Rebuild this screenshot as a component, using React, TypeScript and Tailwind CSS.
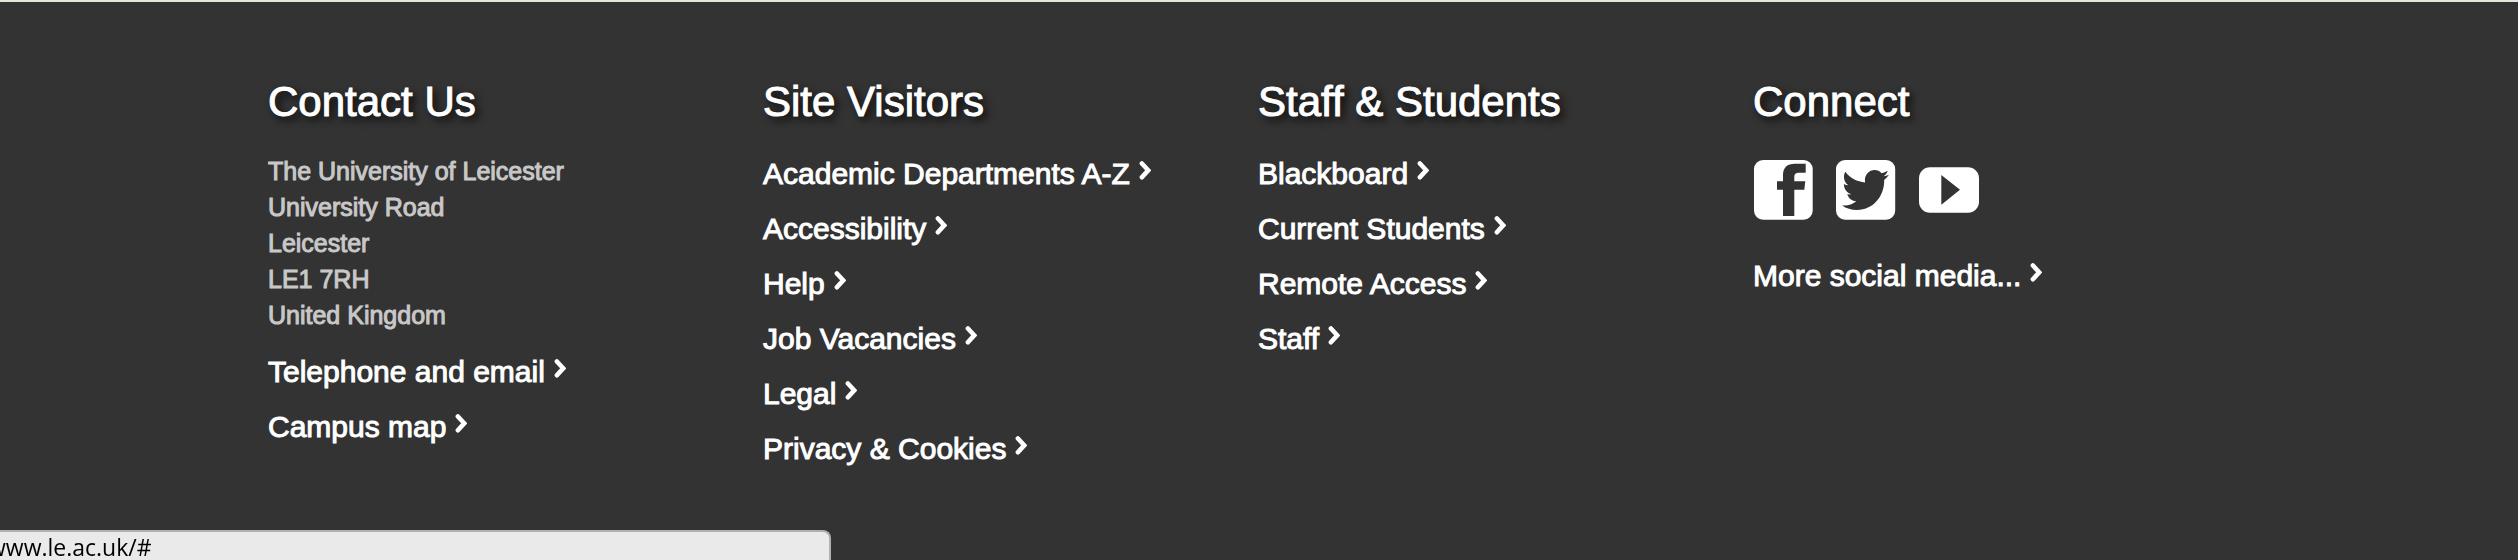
import type { ReactNode } from "react";

function Chevron() {
  return (
    <svg
      aria-hidden="true"
      viewBox="0 0 12 19"
      className="mb-1 ml-[9px] inline-block h-[19px] w-3 align-baseline"
      fill="none"
      stroke="currentColor"
      strokeWidth="4.6"
      strokeLinecap="round"
    >
      <path d="M2.9 2.5 9.2 9.3 2.9 16.3" />
    </svg>
  );
}

function FooterLink({ children }: { children: ReactNode }) {
  return (
    <a href="#" className="block whitespace-nowrap text-[30px] leading-[55px] text-white">
      {children}
      <Chevron />
    </a>
  );
}

function LinkList({ items }: { items: string[] }) {
  return (
    <ul>
      {items.map((item) => (
        <li key={item}>
          <FooterLink>{item}</FooterLink>
        </li>
      ))}
    </ul>
  );
}

function Column({ title, children }: { title: string; children: ReactNode }) {
  return (
    <section>
      <h2 className="mb-5 whitespace-nowrap text-[42px] leading-[48px] text-white [text-shadow:4px_4px_8px_#000000]">
        {title}
      </h2>
      {children}
    </section>
  );
}

function FacebookIcon() {
  return (
    <svg aria-hidden="true" viewBox="1 0 61 60" className="h-[60px] w-[61px]">
      <rect x="2" y="0" width="58.7" height="59.7" rx="9" fill="#fff" />
      <path
        fill="#333"
        d="M53.7 3.7v9h-6.2c-3.8 0-5.2 1.4-5.2 4.6v4h11l-1 8.4h-10V56H31V29.7h-6v-8.4h6V15c0-7.4 4.2-11.3 12-11.3z"
      />
    </svg>
  );
}

function TwitterIcon() {
  return (
    <svg aria-hidden="true" viewBox="1 0 61 60" className="h-[60px] w-[61px]">
      <rect x="1" y="0" width="59.2" height="59.7" rx="9" fill="#fff" />
      <path
        fill="#333"
        transform="translate(7 5.4) scale(.0918 .0962)"
        d="M459.37 151.716c.325 4.548.325 9.097.325 13.645 0 138.72-105.583 298.558-298.558 298.558-59.452 0-114.68-17.219-161.137-47.106 8.447.974 16.568 1.299 25.34 1.299 49.055 0 94.213-16.568 130.274-44.832-46.132-.975-84.792-31.188-98.112-72.772 6.498.974 12.995 1.624 19.818 1.624 9.421 0 18.843-1.3 27.614-3.573-48.081-9.747-84.143-51.98-84.143-102.985v-1.299c13.969 7.797 30.214 12.67 47.431 13.319-28.264-18.843-46.781-51.005-46.781-87.391 0-19.492 5.197-37.36 14.294-52.954 51.655 63.675 129.3 105.258 216.365 109.807-1.624-7.797-2.599-15.918-2.599-24.04 0-57.828 46.782-104.934 104.934-104.934 30.213 0 57.502 12.67 76.67 33.137 23.715-4.548 46.456-13.32 66.599-25.34-7.798 24.366-24.366 44.833-46.132 57.827 21.117-2.273 41.584-8.122 60.426-16.243-14.292 20.791-32.161 39.308-52.628 54.253z"
      />
    </svg>
  );
}

function YouTubeIcon() {
  return (
    <svg aria-hidden="true" viewBox="0 0 61 60" className="h-[60px] w-[61px]">
      <rect x="0" y="7.2" width="60" height="45.5" rx="11" fill="#fff" />
      <path fill="#333" d="M22.3 15 41 29.7 22.3 44.7z" />
    </svg>
  );
}

const address = [
  "The University of Leicester",
  "University Road",
  "Leicester",
  "LE1 7RH",
  "United Kingdom",
];

export default function App() {
  return (
    <div className="min-h-screen border-t-2 border-[#e3e8dc] bg-[#333333] font-['Liberation_Sans',Arial,sans-serif]">
      <footer className="mx-auto grid max-w-[1982px] grid-cols-4 pt-[76px] pr-[2px] [-webkit-text-stroke:1px_currentColor]">
        <Column title="Contact Us">
          <address className="mb-[11px] pt-[7px] text-[25px] leading-9 text-[#c8c8c8] not-italic">
            {address.map((line) => (
              <div key={line} className="whitespace-nowrap">
                {line}
              </div>
            ))}
          </address>
          <LinkList items={["Telephone and email", "Campus map"]} />
        </Column>
        <Column title="Site Visitors">
          <LinkList
            items={[
              "Academic Departments A-Z",
              "Accessibility",
              "Help",
              "Job Vacancies",
              "Legal",
              "Privacy & Cookies",
            ]}
          />
        </Column>
        <Column title="Staff & Students">
          <LinkList items={["Blackboard", "Current Students", "Remote Access", "Staff"]} />
        </Column>
        <Column title="Connect">
          <div className="mb-7 flex gap-[22px] pt-[14px]">
            <a href="#" aria-label="Facebook">
              <FacebookIcon />
            </a>
            <a href="#" aria-label="Twitter">
              <TwitterIcon />
            </a>
            <a href="#" aria-label="YouTube">
              <YouTubeIcon />
            </a>
          </div>
          <FooterLink>More social media...</FooterLink>
        </Column>
      </footer>
      <div className="fixed bottom-0 left-0 h-[30px] w-[33%] overflow-hidden rounded-tr-lg border-t-2 border-r-2 border-[#b0b0b0] bg-[#eaeaea] font-['Open_Sans','Noto_Sans',sans-serif] text-[23px] leading-[30px] text-black">
        <span className="-ml-3 block">www.le.ac.uk/#</span>
      </div>
    </div>
  );
}
